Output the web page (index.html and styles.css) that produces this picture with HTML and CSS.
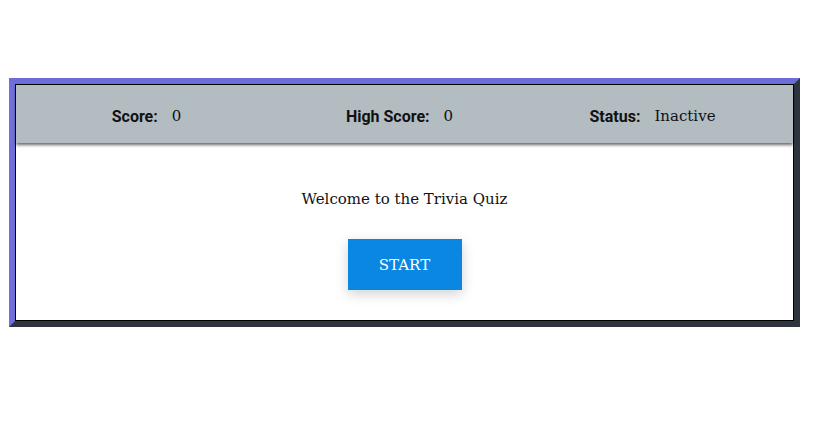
FILE: index.html
```html
<!DOCTYPE html>
<html>
<head>
<meta charset="utf-8">
<link rel="stylesheet" href="styles.css">
</head>
<body>
<div class="page">
  <div class="frame">
    <div class="quiz">
      <div class="header">
        <div class="stat"><span class="label">Score:</span><span class="value">0</span></div>
        <div class="stat"><span class="label">High Score:</span><span class="value">0</span></div>
        <div class="stat"><span class="label">Status:</span><span class="value">Inactive</span></div>
      </div>
      <div class="main">
        <p class="welcome">Welcome to the Trivia Quiz</p>
        <button class="start">START</button>
      </div>
    </div>
  </div>
</div>
</body>
</html>
```
FILE: styles.css
```css
html, body {
  margin: 0;
  padding: 0;
  background: #ffffff;
}
.page {
  padding: 78px 14px 0 9px;
}
.frame {
  border: 6px solid;
  border-color: #6c6cd6 #2e353e #2e353e #7070dc;
}
.quiz {
  border: 1px solid #000;
  background: #fff;
  font-family: "DejaVu Serif", serif;
}
.header {
  display: grid;
  grid-template-columns: 1fr 1fr 1fr;
  height: 54px;
  padding: 4px 14px 0 4px;
  align-items: center;
  background: #b2bcc1;
  box-shadow: 0 2px 3px rgba(0,0,0,0.6);
  position: relative;
}
.stat {
  display: flex;
  justify-content: center;
  gap: 14px;
  font-size: 15px;
  color: #111;
}
.label {
  font-family: "Roboto", sans-serif;
  font-weight: 700;
  font-size: 16px;
}
.value {
  font-size: 15px;
}
.main {
  display: flex;
  flex-direction: column;
  align-items: center;
  padding: 46px 0 30px;
}
.welcome {
  margin: 0;
  font-size: 15px;
  line-height: 20px;
  color: #111;
}
.start {
  margin-top: 30px;
  width: 114px;
  height: 51px;
  border: none;
  background: #0a87e3;
  color: #fff;
  font-family: "DejaVu Serif", serif;
  font-size: 15px;
  box-shadow: 0 4px 12px rgba(0,0,0,0.18);
}
```
